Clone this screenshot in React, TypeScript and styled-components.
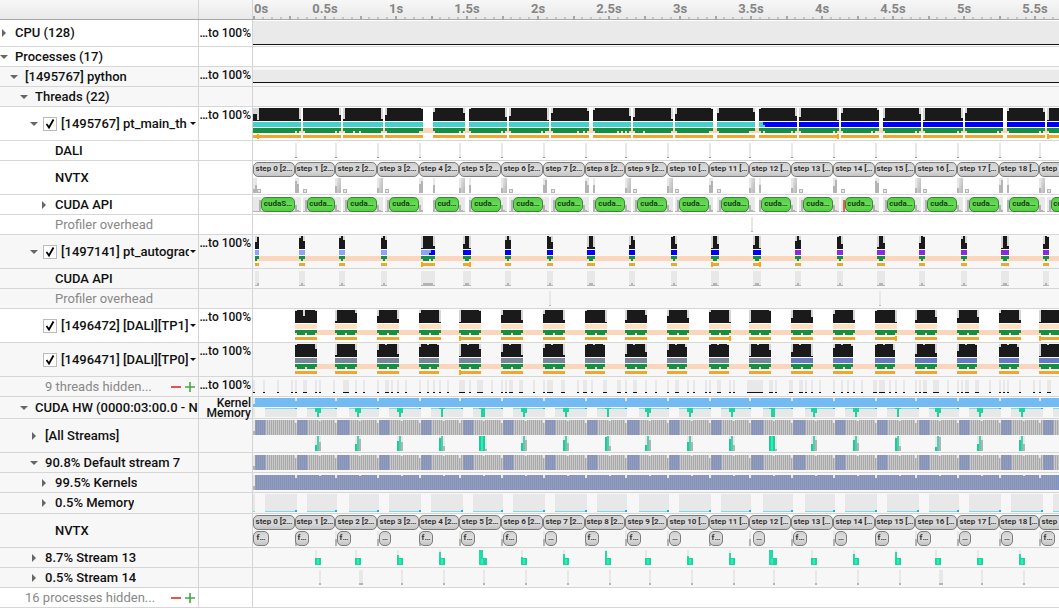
import React from "react";
import styled, { createGlobalStyle, css } from "styled-components";

const GlobalStyle = createGlobalStyle`
  * { box-sizing: border-box; }
  body {
    margin: 0;
    background: #fff;
    color: #111;
    font-family: Roboto, "Liberation Sans", sans-serif;
    font-size: 13px;
    overflow: hidden;
  }
`;

/* ---------- layout ---------- */

const View = styled.main`
  width: 100%;
  min-height: 100vh;
  overflow: hidden;
`;

const columns = css`
  display: grid;
  grid-template-columns: 199px 54px minmax(0, 1fr);
`;

const Header = styled.header`
  ${columns}
  height: 20px;
  border-bottom: 1px solid #a8a8a8;
  background: linear-gradient(#f7f7f7, #e9e9e9);
`;

const HeaderCell = styled.div`
  border-right: 1px solid #d4d4d4;
`;

const Row = styled.div<{ $h: number; $shade?: boolean }>`
  ${columns}
  height: ${(p) => p.$h}px;
  border-bottom: 1px solid #d6d6d6;
  background: ${(p) => (p.$shade ? "#f7f7f7" : "#fff")};
`;

const LabelCell = styled.div<{ $level: number }>`
  display: flex;
  align-items: center;
  min-width: 0;
  overflow: hidden;
  border-right: 1px solid #d4d4d4;
  padding-left: ${(p) => p.$level * 10}px;
`;

const Toggle = styled.button`
  flex: none;
  display: flex;
  align-items: center;
  justify-content: center;
  width: 8px;
  height: 12px;
  margin-right: 7px;
  padding: 0;
  border: 0;
  background: none;
  color: #666;
`;

const ToggleSpace = styled.span`
  flex: none;
  width: 15px;
`;

const Name = styled.span<{ $muted?: boolean }>`
  flex: 0 1 auto;
  min-width: 0;
  overflow: hidden;
  white-space: nowrap;
  line-height: 16px;
  font-weight: ${(p) => (p.$muted ? 400 : 500)};
  color: ${(p) => (p.$muted ? "#888" : "#111")};
`;

const ThreadLabel = styled.label`
  display: flex;
  flex: 1;
  align-items: center;
  gap: 4px;
  min-width: 0;
  margin-left: -2px;
`;

const CheckWrap = styled.span`
  position: relative;
  flex: none;
  width: 14px;
  height: 14px;
`;

const CheckBox = styled.input`
  appearance: none;
  display: block;
  width: 14px;
  height: 14px;
  margin: 0;
  border: 1px solid #bbb;
  background: #fff;
`;

const CheckMark = styled.svg`
  position: absolute;
  inset: 0;
  pointer-events: none;
`;

const MenuButton = styled.button`
  flex: none;
  display: flex;
  align-items: center;
  width: 9px;
  height: 16px;
  padding: 0 0 0 1px;
  border: 0;
  background: none;
`;

const HiddenActions = styled.span`
  display: flex;
  gap: 2px;
  margin-left: auto;
  padding-right: 2px;
`;

const IconButton = styled.button`
  display: flex;
  padding: 0;
  border: 0;
  background: none;
`;

const ScaleCell = styled.div`
  border-right: 1px solid #d4d4d4;
  padding: 1px 1px 0 0;
  text-align: right;
  white-space: nowrap;
  font-size: 12px;
  font-weight: 500;
  line-height: 14px;
`;

const ScaleCentered = styled(ScaleCell)`
  padding-top: 6px;
`;

const ScalePair = styled(ScaleCell)`
  line-height: 10px;
`;

const Lane = styled.div`
  position: relative;
  min-width: 0;
  overflow: hidden;
`;

const Chart = styled.svg`
  display: block;
  width: 100%;
  height: 100%;
  shape-rendering: crispEdges;
`;

const Block = styled.span<{ $tone: "gray" | "green"; $row: number }>`
  position: absolute;
  top: ${(p) => p.$row}px;
  height: 15px;
  overflow: hidden;
  border: 1px solid ${(p) => (p.$tone === "green" ? "#358a30" : "#7c7c7c")};
  border-radius: 5px;
  background: ${(p) =>
    p.$tone === "green"
      ? "linear-gradient(#54cc44, #66dd55 50%, #54cc44)"
      : "linear-gradient(#cfcfcf, #dedede 50%, #c4c4c4)"};
  color: ${(p) => (p.$tone === "green" ? "#12400e" : "#333")};
  text-align: center;
  font-size: 8px;
  font-weight: 700;
  line-height: 11px;
  white-space: nowrap;
`;

/* ---------- time axis ---------- */

const BUCKET = 2;
const SECOND = 142;
const LANE_WIDTH = 4000;

/* ---------- samples, in buckets from the start of the session ---------- */

const STEPS = [0, 21, 41, 62, 83, 103, 124, 145, 166, 186, 207, 228, 248, 269, 290, 311, 331, 352, 373, 393, 414];

type Span = [number, number];
type Run = [start: number, end: number, fadeIn: number, fadeOut: number];

const MAIN: Run[] = [
  [0, 24, 0, 11], [25, 44, 0, 7], [45, 65, 11, 11], [66, 85, 7, 1], [90, 106, 4, 5], [108, 127, 1, 9],
  [128, 148, 8, 12], [149, 168, 5, 3], [170, 189, 2, 8], [190, 210, 9, 11], [211, 230, 6, 1],
  [232, 251, 5, 4], [253, 272, 1, 8], [273, 293, 9, 12], [294, 313, 5, 2], [315, 334, 10, 6],
  [335, 355, 12, 10], [356, 375, 5, 0], [377, 396, 3, 4], [397, 416, 12, 4],
];

const MAIN_DIPS = [
  21, 23, 25, 41, 43, 45, 50, 53, 64, 66, 83, 84, 90, 103, 105, 108, 124, 126, 128, 144, 146, 147, 149,
  162, 165, 167, 170, 182, 184, 186, 188, 190, 195, 209, 211, 228, 229, 232, 248, 249, 250, 253, 255,
  269, 271, 273, 290, 292, 294, 309, 311, 312, 315, 331, 333, 335, 352, 354, 356, 372, 374, 377, 393, 395, 397,
];

const API_CALLS: Span[] = [
  [4, 21], [27, 41], [47, 62], [68, 83], [91, 103], [109, 124], [130, 145], [151, 165], [171, 186], [192, 207],
  [213, 228], [234, 248], [254, 269], [275, 290], [296, 310], [317, 331], [337, 352], [358, 373], [378, 393], [399, 413],
];

const RANGES: { wide: boolean; a: number; b: number; next: number; box: boolean }[] = [
  { wide: false, a: 4, b: 8, next: 2, box: true },
  { wide: false, a: 12, b: 9, next: 25, box: true },
  { wide: true, a: 7, b: 0, next: 45, box: true },
  { wide: true, a: 5, b: 0, next: 66, box: true },
  { wide: false, a: 9, b: 12, next: 90, box: false },
  { wide: true, a: 5, b: 0, next: 108, box: false },
  { wide: true, a: 5, b: 0, next: 128, box: true },
  { wide: false, a: 8, b: 13, next: 149, box: true },
  { wide: false, a: 12, b: 8, next: 170, box: false },
  { wide: true, a: 5, b: 0, next: 190, box: true },
  { wide: true, a: 7, b: 0, next: 211, box: true },
  { wide: false, a: 8, b: 12, next: 232, box: true },
  { wide: true, a: 5, b: 0, next: 253, box: false },
  { wide: true, a: 5, b: 0, next: 273, box: true },
  { wide: false, a: 7, b: 13, next: 294, box: true },
  { wide: false, a: 12, b: 10, next: 315, box: true },
  { wide: true, a: 5, b: 0, next: 335, box: true },
  { wide: true, a: 5, b: 0, next: 356, box: true },
  { wide: false, a: 8, b: 13, next: 377, box: false },
  { wide: true, a: 5, b: 0, next: 397, box: true },
];

const AUTOGRAD: [start: number, loads: number[]][] = [
  [1, [7, 12]], [23, [11, 13, 8]], [43, [11, 13, 9]], [64, [11, 13, 9]], [84, [1, 13, 13, 13, 13, 13, 3]],
  [105, [5, 13, 13, 1]], [126, [9, 13, 9]], [147, [13, 12, 7]], [167, [2, 13, 13, 2]], [188, [4, 13, 9]],
  [209, [12, 13, 5]], [229, [1, 13, 13, 5]], [250, [4, 13, 13, 1]], [271, [8, 13, 9]], [292, [12, 13, 5]],
  [312, [2, 13, 13, 6]], [333, [6, 13, 12]], [354, [10, 13, 6]], [374, [1, 13, 13, 3]], [395, [5, 13, 12]],
];

const TP1_FADE: Span[] = [
  [1, 1], [11, 3], [6, 9], [3, 12], [12, 1], [5, 10], [4, 10], [1, 12], [10, 5], [6, 8],
  [2, 12], [12, 1], [8, 7], [4, 10], [1, 12], [10, 7], [8, 7], [3, 10], [12, 1],
];
const TP0_FADE: Span[] = [
  [1, 5], [11, 6], [6, 10], [3, 1], [12, 5], [8, 11], [4, 11], [1, 1], [10, 8], [6, 3],
  [1, 1], [12, 6], [8, 12], [4, 2], [1, 6], [10, 9], [7, 1], [3, 3], [12, 2],
];
const TP0_WIDTH = [11, 11, 11, 10, 11, 11, 11, 10, 11, 10, 10, 11, 11, 10, 10, 11, 10, 10, 11];

const HIDDEN: Span[] = [
  [0, 1], [5, 1], [12, 1], [19, 1], [21, 1], [25, 2], [31, 1], [33, 1], [40, 1], [45, 3], [51, 1], [55, 1],
  [62, 1], [66, 2], [69, 1], [72, 1], [76, 1], [83, 1], [87, 1], [90, 1], [93, 1], [97, 1], [103, 3], [108, 1],
  [112, 3], [119, 1], [124, 1], [126, 1], [128, 2], [133, 2], [140, 1], [145, 1], [147, 3], [154, 2], [162, 1],
  [165, 2], [169, 1], [175, 2], [182, 2], [186, 1], [190, 2], [196, 1], [201, 1], [207, 1], [211, 2], [217, 1],
  [220, 1], [226, 1], [228, 1], [232, 2], [238, 1], [240, 1], [247, 8], [258, 2], [261, 1], [268, 2], [273, 2],
  [276, 1], [279, 1], [283, 1], [290, 1], [294, 1], [297, 1], [300, 1], [304, 1], [310, 2], [313, 3], [318, 1],
  [321, 1], [325, 1], [331, 1], [333, 1], [335, 2], [340, 3], [347, 1], [352, 1], [354, 1], [356, 2], [361, 2],
  [368, 1], [373, 1], [375, 1], [377, 1], [383, 1], [390, 1], [393, 1], [397, 2],
];

const MEMORY: Span[] = [
  [6, 22], [27, 42], [48, 63], [68, 84], [89, 105], [110, 125], [130, 146], [151, 167], [172, 187], [193, 208],
  [213, 229], [234, 249], [255, 270], [276, 291], [296, 312], [317, 333], [338, 353], [358, 374], [379, 395], [400, 416],
];

const COPIES: [at: number, lead: number, tail: number][] = [
  [31, 6, 9], [51, 7, 12], [72, 10, 9], [93, 13, 5], [113, 15, 2], [134, 8, 11], [155, 11, 8], [176, 14, 5],
  [196, 6, 11], [217, 9, 9], [238, 12, 6], [258, 15, 2], [279, 7, 11], [300, 11, 8], [321, 13, 5], [341, 4, 14],
  [362, 7, 11], [383, 11, 7],
];

const FORWARD: [start: number, end: number, label: string][] = [
  [0, 8, "f…"], [21, 28, "f…"], [42, 49, "f…"], [63, 69, "…"], [83, 90, "f…"], [104, 111, "f…"], [125, 132, "f…"],
  [146, 152, "…"], [166, 173, "f…"], [187, 194, "f…"], [208, 214, "…"], [228, 235, "f…"], [250, 256, "…"],
  [270, 277, "f…"], [291, 297, "…"], [311, 318, "f…"], [332, 339, "f…"], [353, 359, "…"], [374, 380, "…"], [394, 401, "f…"],
];

/* ---------- chart parts ---------- */

const LIGHT = "#e8e8e8";
const MID = "#b4b4b4";
const BLACK = "#1a1a1a";
const PEACH = "#fcd5bd";
const GREEN = "#158f41";

type BarProps = { at: number; n?: number; y: number; h: number; fill: string };
const Bar = ({ at, n = 1, y, h, fill }: BarProps) => (
  <rect x={at * BUCKET} y={y} width={n * BUCKET} height={h} fill={fill} />
);

const PatternSheet = styled.svg`
  position: absolute;
`;

const Patterns = () => (
  <PatternSheet width="0" height="0" aria-hidden="true">
    <defs>
      <pattern id="samples" width="2" height="4" patternUnits="userSpaceOnUse">
        <rect width="2" height="4" fill="#ffa50a" />
        <rect width="1" height="4" fill="#dcaa5a" />
      </pattern>
      <pattern id="kernelsGray" width="2" height="20" patternUnits="userSpaceOnUse">
        <rect width="2" height="20" fill="#c9c9c9" />
        <rect width="1" height="20" fill="#a9a9a9" />
      </pattern>
      <pattern id="kernelsBlue" width="2" height="20" patternUnits="userSpaceOnUse">
        <rect width="2" height="20" fill="#8092cc" />
        <rect width="1" height="20" fill="#989dac" />
      </pattern>
      <linearGradient id="rangeFill" x1="0" x2="1" y1="0" y2="1">
        <stop offset="0" stopColor="#e2e2e2" />
        <stop offset="1" stopColor="#b4b4b4" />
      </linearGradient>
    </defs>
  </PatternSheet>
);

const Usage = ({ y, h }: { y: number; h: number }) => (
  <Chart>
    <rect x="0" y={y} width="100%" height={h} fill="#eaeaea" />
    <rect x="0" y={y + h} width="100%" height="1" fill="#111" />
  </Chart>
);

const SampleMarks = ({ at }: { at: number[] }) => (
  <>{at.map((k) => <Bar key={k} at={k} y={27} h={5} fill="#ffa50a" />)}</>
);

const MainThread = () => (
  <Chart>
    <Bar at={0} n={LANE_WIDTH} y={21} h={5} fill={PEACH} />
    {MAIN.map(([s, e, l, r]) => (
      <g key={s}>
        <Bar at={s} n={e - s} y={1} h={13} fill={BLACK} />
        <Bar at={s} y={1} h={l} fill="#d6d6d6" />
        <Bar at={e - 1} y={1} h={r} fill="#d6d6d6" />
        <Bar at={s} n={e - s} y={15} h={5} fill={s < 253 ? "#46d1cc" : "#0000ff"} />
        <Bar at={s} n={e - s} y={21} h={5} fill={GREEN} />
        <Bar at={s} n={e - s} y={28} h={3} fill="url(#samples)" />
      </g>
    ))}
    <Bar at={0} n={3} y={1} h={6} fill="#d6d6d6" />
    <Bar at={2} y={7} h={6} fill="#d6d6d6" />
    <Bar at={253} n={2} y={15} h={5} fill="#46d1cc" />
    <Bar at={255} y={18} h={2} fill="#46d1cc" />
    {MAIN_DIPS.map((k) => <Bar key={k} at={k} y={24} h={2} fill={PEACH} />)}
    <SampleMarks at={[2, 292, 397]} />
  </Chart>
);

const DaliLane = () => (
  <Chart>
    {STEPS.slice(1).map((k) => (
      <g key={k}>
        <Bar at={k} y={2} h={15} fill={LIGHT} />
        <Bar at={k} y={16} h={1} fill="#8c8cc4" />
      </g>
    ))}
  </Chart>
);

const blockBox = (s: number, e: number) => ({ left: s * BUCKET, width: (e - s) * BUCKET });

const StepBlocks = () => (
  <>
    {STEPS.slice(0, -1).map((s, i) => (
      <Block key={s} $tone="gray" $row={1} style={blockBox(s, STEPS[i + 1])}>
        {`step ${i} ${i < 10 ? "[2…" : "[…"}`}
      </Block>
    ))}
  </>
);

const NvtxLane = () => (
  <>
    <Chart>
      {RANGES.map((r, i) => (
        <g key={i}>
          <Bar at={STEPS[i]} n={r.wide ? 3 : 2} y={17} h={15} fill={LIGHT} />
          <Bar at={STEPS[i]} y={32 - r.a} h={r.a} fill={MID} />
          {r.wide ? (
            <Bar at={STEPS[i] + 1} n={2} y={17} h={15} fill="url(#rangeFill)" />
          ) : (
            <Bar at={STEPS[i] + 1} y={32 - r.b} h={r.b} fill={MID} />
          )}
          {r.box ? (
            <>
              <Bar at={r.next} n={2} y={28} h={4} fill={MID} />
              <rect x={r.next * BUCKET + 1} y={29} width={2} height={2} fill={LIGHT} />
            </>
          ) : (
            <>
              <Bar at={r.next} y={17} h={15} fill={LIGHT} />
              <Bar at={r.next} y={24} h={8} fill={MID} />
            </>
          )}
        </g>
      ))}
    </Chart>
    <StepBlocks />
  </>
);

const CudaApiLane = () => (
  <>
    <Chart>
      {API_CALLS.map(([s, e], i) => (
        <g key={s}>
          <Bar at={MAIN[i][0]} n={MAIN[i][1] - MAIN[i][0]} y={2} h={15} fill={LIGHT} />
          <Bar at={MAIN[i][0]} n={MAIN[i][1] - MAIN[i][0]} y={16} h={1} fill={MID} />
          <Bar at={s - 1} y={5} h={12} fill={s === 296 ? "#ef5a5a" : MID} />
          <Bar at={e} y={10} h={7} fill={MID} />
          <Bar at={e + 1} y={15} h={2} fill={MID} />
        </g>
      ))}
    </Chart>
    {API_CALLS.map(([s, e], i) => (
      <Block key={s} $tone="green" $row={2} style={blockBox(s, e)}>
        {i === 0 ? "cudaS…" : i === 4 ? "cud…" : "cuda…"}
      </Block>
    ))}
  </>
);

const Overhead = ({ at }: { at: number[] }) => (
  <Chart>
    {at.map((k) => (
      <g key={k}>
        <Bar at={k} y={2} h={15} fill={LIGHT} />
        <Bar at={k} y={16} h={1} fill={MID} />
      </g>
    ))}
  </Chart>
);

const autogradColor = (k: number) => (k < 100 ? "#8aa5fb" : k < 260 ? "#0000ff" : "#8a2be2");

const AutogradThread = () => (
  <Chart>
    <Bar at={1} n={LANE_WIDTH} y={21} h={5} fill={PEACH} />
    {AUTOGRAD.map(([s, loads]) => (
      <g key={s}>
        <Bar at={s} n={loads.length} y={1} h={13} fill="#d6d6d6" />
        {loads.map((v, i) => <Bar key={i} at={s + i} y={14 - v} h={v} fill={BLACK} />)}
        <Bar at={s} n={loads.length} y={15} h={5} fill={autogradColor(s)} />
        <Bar at={s} n={loads.length} y={21} h={3} fill={GREEN} />
        <Bar at={s + (s > 1 ? 1 : 0)} n={Math.max(1, loads.length - 2)} y={24} h={2} fill={GREEN} />
        <Bar at={s} n={loads.length} y={28} h={3} fill="url(#samples)" />
      </g>
    ))}
    <Bar at={89} n={2} y={15} h={5} fill="#0000ff" />
    <Bar at={88} y={18} h={2} fill="#0000ff" />
    <Bar at={88} y={24} h={2} fill={PEACH} />
    <SampleMarks at={[84, 108, 229, 253]} />
  </Chart>
);

const AutogradApi = () => (
  <Chart>
    {AUTOGRAD.map(([s, loads]) => (
      <g key={s}>
        <Bar at={s} n={loads.length} y={2} h={15} fill={LIGHT} />
        <Bar at={s} n={loads.length} y={16} h={1} fill={MID} />
        <Bar at={s + 1} n={Math.max(1, loads.length - 2)} y={14} h={3} fill={MID} />
      </g>
    ))}
  </Chart>
);

type WorkerProps = { fades: Span[]; widths?: number[]; color: (i: number) => string; marks: number[]; crown?: boolean };
const WorkerThread = ({ fades, widths, color, marks, crown }: WorkerProps) => (
  <Chart>
    <Bar at={21} n={LANE_WIDTH} y={21} h={5} fill={PEACH} />
    {fades.map(([l, r], i) => {
      const s = STEPS[i + 1];
      const n = widths ? widths[i] : 11;
      return (
        <g key={s}>
          <Bar at={s} n={n} y={1} h={13} fill={BLACK} />
          <Bar at={s} y={1} h={l} fill="#d6d6d6" />
          <Bar at={s + n - 1} y={1} h={r} fill="#d6d6d6" />
          {(crown && i > 1) && <Bar at={s + 4} y={1} h={1} fill="#d6d6d6" />}
          {(!crown && i === 0) && <Bar at={s + 4} y={1} h={6} fill="#d6d6d6" />}
          <Bar at={s} n={n} y={15} h={5} fill={color(i)} />
          <Bar at={s} n={n} y={21} h={3} fill={GREEN} />
          <Bar at={s + 1} n={n - 2} y={24} h={2} fill={GREEN} />
          <Bar at={s + 5} y={24} h={2} fill={PEACH} />
          <Bar at={s} n={n} y={28} h={3} fill="url(#samples)" />
        </g>
      );
    })}
    <SampleMarks at={marks} />
  </Chart>
);

const HiddenThreads = () => (
  <Chart>
    {HIDDEN.map(([k, n]) => (
      <g key={k}>
        <Bar at={k} n={n} y={3} h={13} fill={LIGHT} />
        <Bar at={k} n={n} y={15} h={1} fill="#111" />
      </g>
    ))}
  </Chart>
);

const Hardware = () => (
  <Chart>
    <Bar at={0} n={LANE_WIDTH} y={1} h={9} fill="#74bbf3" />
    <Bar at={0} y={1} h={6} fill={LIGHT} />
    {STEPS.slice(1).map((k) => <Bar key={k} at={k} y={1} h={3} fill={LIGHT} />)}
    <Bar at={0} y={11} h={9} fill={LIGHT} />
    {MEMORY.map(([s, e]) => (
      <g key={s}>
        <Bar at={s} n={e - s} y={11} h={9} fill={LIGHT} />
        <Bar at={s} n={e - s} y={11} h={1} fill="#74dfe6" />
        <Bar at={e - 1} y={11} h={1} fill="#16b4ff" />
      </g>
    ))}
    {COPIES.map(([k, lead, tail]) => (
      <g key={k}>
        <Bar at={k} n={3} y={11} h={lead > 12 ? 1 : 4} fill="#1fd3a3" />
        <Bar at={k + 1} n={lead > 14 ? 2 : 1} y={11} h={9} fill="#1fd3a3" />
        {tail > 8 && <Bar at={k + 2} y={11} h={5} fill="#1fd3a3" />}
      </g>
    ))}
  </Chart>
);

const KernelBand = ({ y, blue }: { y: number; blue?: boolean }) => (
  <>
    <Bar at={0} y={y} h={15} fill={LIGHT} />
    <Bar at={0} y={y + 11} h={4} fill={MID} />
    <Bar at={1} n={LANE_WIDTH} y={y} h={15} fill={blue ? "url(#kernelsBlue)" : "url(#kernelsGray)"} />
    {!blue &&
      MEMORY.map(([s], i) => {
        const from = i === 0 ? 1 : MEMORY[i - 1][1];
        return <Bar key={s} at={from} n={s - from} y={y} h={15} fill="url(#kernelsBlue)" />;
      })}
    {STEPS.slice(1).map((k) => <Bar key={k} at={k} y={y} h={3} fill={LIGHT} />)}
    {COPIES.map(([k]) => <Bar key={k} at={k + 2} y={y} h={1} fill={LIGHT} />)}
  </>
);

const AllStreams = () => (
  <Chart>
    <KernelBand y={1} />
    {COPIES.map(([k, lead, tail]) => (
      <g key={k}>
        <Bar at={k} n={lead > 14 ? 4 : 3} y={17} h={15} fill={LIGHT} />
        <Bar at={k} y={32 - lead} h={lead} fill="#26c79b" />
        <Bar at={k + 1} y={17} h={15} fill={lead > 14 ? "#20f5b8" : "#4fd0b0"} />
        {lead > 14 && <Bar at={k + 2} y={17} h={15} fill="#26c79b" />}
        <Bar at={k + (lead > 14 ? 3 : 2)} y={32 - tail} h={tail} fill={MID} />
      </g>
    ))}
  </Chart>
);

const MemoryLane = () => (
  <Chart>
    <Bar at={0} y={1} h={18} fill={LIGHT} />
    <Bar at={0} y={18} h={1} fill="#74dfe6" />
    {MEMORY.map(([s, e]) => (
      <g key={s}>
        <Bar at={s} n={e - s} y={1} h={18} fill={LIGHT} />
        <Bar at={s} n={e - s} y={18} h={1} fill="#74dfe6" />
        <Bar at={e - 1} y={17} h={2} fill="#22aee6" />
      </g>
    ))}
  </Chart>
);

const StreamNvtx = () => (
  <>
    <Chart>
      {STEPS.slice(1, -1).map((k) => (
        <g key={k}>
          <Bar at={k} y={17} h={15} fill={LIGHT} />
          <Bar at={k} y={25} h={7} fill={MID} />
        </g>
      ))}
    </Chart>
    <StepBlocks />
    {FORWARD.map(([s, e, label]) => (
      <Block key={s} $tone="gray" $row={17} style={blockBox(s, e)}>
        {label}
      </Block>
    ))}
  </>
);

const Stream13 = () => (
  <Chart>
    {COPIES.map(([k, lead]) => (
      <g key={k}>
        <Bar at={k} y={2} h={15} fill={LIGHT} />
        <Bar at={k} y={17 - lead} h={lead} fill="#26d9a8" />
        <Bar at={k + (lead > 14 ? 1 : 0)} n={3} y={10} h={7} fill="#22d3a2" />
        {lead > 14 && <Bar at={k} n={2} y={2} h={15} fill="#22dba8" />}
        <Bar at={k + 1} y={11} h={5} fill="#22f3b8" />
      </g>
    ))}
  </Chart>
);

const Stream14 = () => (
  <Chart>
    {COPIES.map(([k]) => {
      const n = k === 51 || k === 341 ? 2 : 1;
      return (
        <g key={k}>
          <Bar at={k + 2} n={n} y={2} h={15} fill={LIGHT} />
          <Bar at={k + 2} n={n} y={15} h={2} fill={MID} />
        </g>
      );
    })}
  </Chart>
);

const Ruler = () => {
  const ticks = Array.from({ length: 92 }, (_, i) => i);
  const labels = Array.from({ length: 12 }, (_, i) => i / 2);
  return (
    <Lane>
      <Chart>
        {ticks.map((i) => (
          <rect
            key={i}
            x={Math.round((i * SECOND) / 16)}
            y={i % 4 ? 17 : 16}
            width={2}
            height={i % 4 ? 2 : 3}
            fill={i % 4 ? "#c4c4c4" : "#a6a6a6"}
          />
        ))}
        {labels.map((t) => (
          <text
            key={t}
            x={t * SECOND + 1}
            y="13"
            textAnchor={t === 0 ? "start" : "middle"}
            fontSize="13"
            fontWeight="700"
            fill="#858585"
          >
            {t}s
          </text>
        ))}
      </Chart>
    </Lane>
  );
};

/* ---------- rows ---------- */

type RowProps = {
  name: string;
  level: number;
  h?: number;
  shade?: boolean;
  arrow?: "open" | "closed";
  thread?: boolean;
  muted?: boolean;
  actions?: boolean;
  scale?: "top" | "center" | "pair";
  children?: React.ReactNode;
};

const Arrow = ({ open }: { open: boolean }) => (
  <Toggle aria-label={open ? "Collapse" : "Expand"}>
    {open ? (
      <svg width="8" height="4" viewBox="0 0 8 4"><path d="M0 0h8L4 4z" fill="#666" /></svg>
    ) : (
      <svg width="4" height="8" viewBox="0 0 4 8"><path d="M0 0v8l4-4z" fill="#666" /></svg>
    )}
  </Toggle>
);

const TreeRow = ({ name, level, h = 20, shade, arrow, thread, muted, actions, scale, children }: RowProps) => (
  <Row $h={h} $shade={shade}>
    <LabelCell $level={level}>
      {arrow ? <Arrow open={arrow === "open"} /> : <ToggleSpace />}
      {thread ? (
        <>
          <ThreadLabel>
            <CheckWrap>
              <CheckBox type="checkbox" defaultChecked />
              <CheckMark width="14" height="14" viewBox="0 0 14 14">
                <path d="M3.5 7l2.5 3.5 4.5-8" fill="none" stroke="#000" strokeWidth="1.8" />
              </CheckMark>
            </CheckWrap>
            <Name>{name}</Name>
          </ThreadLabel>
          <MenuButton aria-label="Thread options">
            <svg width="6" height="3" viewBox="0 0 6 3"><path d="M0 0h6L3 3z" fill="#111" /></svg>
          </MenuButton>
        </>
      ) : (
        <Name $muted={muted}>{name}</Name>
      )}
      {actions && (
        <HiddenActions>
          <IconButton aria-label="Show fewer">
            <svg width="12" height="12" viewBox="0 0 12 12"><path d="M1 6h10" stroke="#e02828" strokeWidth="1.6" /></svg>
          </IconButton>
          <IconButton aria-label="Show more">
            <svg width="12" height="12" viewBox="0 0 12 12"><path d="M1 6h10M6 1v10" stroke="#43a843" strokeWidth="1.6" /></svg>
          </IconButton>
        </HiddenActions>
      )}
    </LabelCell>
    {scale === "pair" ? (
      <ScalePair>Kernel<br />Memory</ScalePair>
    ) : scale === "center" ? (
      <ScaleCentered>…to 100%</ScaleCentered>
    ) : (
      <ScaleCell>{scale ? "…to 100%" : null}</ScaleCell>
    )}
    <Lane>{children}</Lane>
  </Row>
);

export default function App() {
  return (
    <View>
      <GlobalStyle />
      <Patterns />
      <Header>
        <HeaderCell />
        <HeaderCell />
        <Ruler />
      </Header>
      <TreeRow name="CPU (128)" level={0} h={27} arrow="closed" scale="center"><Usage y={1} h={23} /></TreeRow>
      <TreeRow name="Processes (17)" level={0} arrow="open" />
      <TreeRow name="[1495767] python" level={1} shade arrow="open" scale="top"><Usage y={3} h={12} /></TreeRow>
      <TreeRow name="Threads (22)" level={2} shade arrow="open" />
      <TreeRow name="[1495767] pt_main_th" level={3} h={34} arrow="open" thread scale="top"><MainThread /></TreeRow>
      <TreeRow name="DALI" level={4}><DaliLane /></TreeRow>
      <TreeRow name="NVTX" level={4} h={34}><NvtxLane /></TreeRow>
      <TreeRow name="CUDA API" level={4} arrow="closed"><CudaApiLane /></TreeRow>
      <TreeRow name="Profiler overhead" level={4} muted><Overhead at={[249]} /></TreeRow>
      <TreeRow name="[1497141] pt_autograd" level={3} h={34} shade arrow="open" thread scale="top"><AutogradThread /></TreeRow>
      <TreeRow name="CUDA API" level={4} shade><AutogradApi /></TreeRow>
      <TreeRow name="Profiler overhead" level={4} shade muted><Overhead at={[148, 313]} /></TreeRow>
      <TreeRow name="[1496472] [DALI][TP1]" level={3} h={34} thread scale="top">
        <WorkerThread fades={TP1_FADE} color={() => "#ffe1bf"} marks={[103, 238, 321, 393]} />
      </TreeRow>
      <TreeRow name="[1496471] [DALI][TP0]" level={3} h={34} shade thread scale="top">
        <WorkerThread fades={TP0_FADE} widths={TP0_WIDTH} color={(i) => (i < 12 ? "#778899" : "#667bc1")} marks={[103]} crown />
      </TreeRow>
      <TreeRow name="9 threads hidden..." level={3} shade muted actions scale="top"><HiddenThreads /></TreeRow>
      <TreeRow name="CUDA HW (0000:03:00.0 - NVIDIA)" level={2} h={22} shade arrow="open" scale="pair"><Hardware /></TreeRow>
      <TreeRow name="[All Streams]" level={3} h={34} shade arrow="closed"><AllStreams /></TreeRow>
      <TreeRow name="90.8% Default stream 7" level={3} shade arrow="open"><Chart><KernelBand y={2} /></Chart></TreeRow>
      <TreeRow name="99.5% Kernels" level={4} shade arrow="closed"><Chart><KernelBand y={2} blue /></Chart></TreeRow>
      <TreeRow name="0.5% Memory" level={4} h={21} shade arrow="closed"><MemoryLane /></TreeRow>
      <TreeRow name="NVTX" level={4} h={34} shade><StreamNvtx /></TreeRow>
      <TreeRow name="8.7% Stream 13" level={3} shade arrow="closed"><Stream13 /></TreeRow>
      <TreeRow name="0.5% Stream 14" level={3} shade arrow="closed"><Stream14 /></TreeRow>
      <TreeRow name="16 processes hidden..." level={1} muted actions />
    </View>
  );
}
